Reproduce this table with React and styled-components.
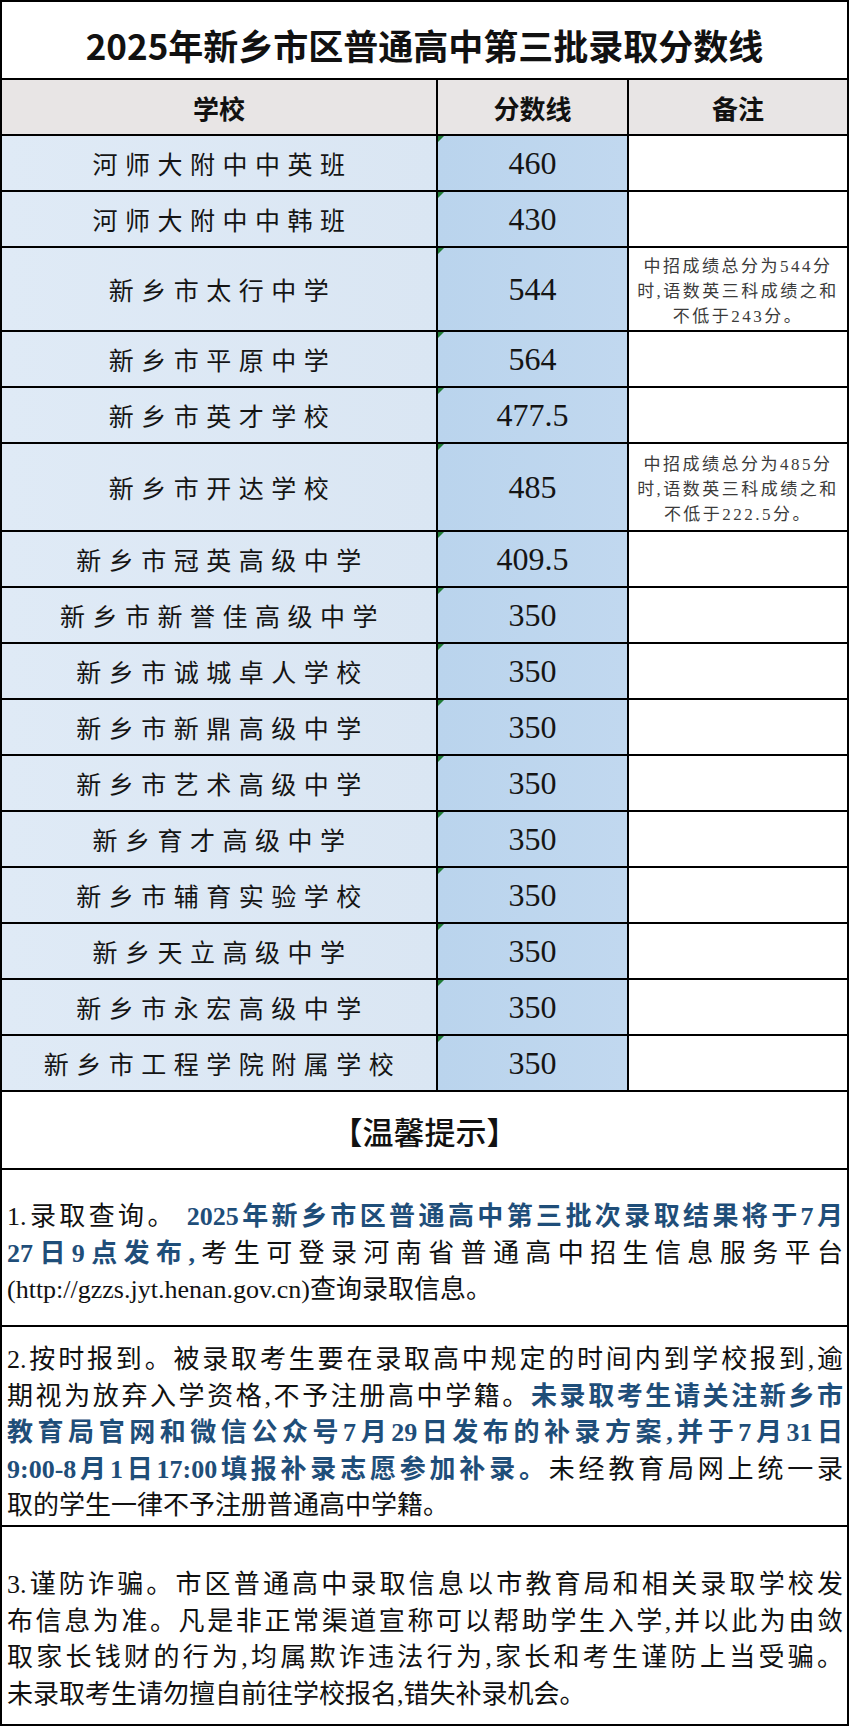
import React from "react";
import styled, { createGlobalStyle } from "styled-components";

const GlobalStyle = createGlobalStyle`
  html, body {
    margin: 0;
    padding: 0;
    background: #fff;
  }
  body {
    font-family: "Liberation Serif", "Noto Sans CJK SC", serif;
    color: #111;
  }
`;

const SANS = `"Noto Sans CJK SC", "Liberation Sans", sans-serif`;
const SERIF = `"Liberation Serif", "Noto Sans CJK SC", serif`;

const schools = [
  { name: "河师大附中中英班", score: "460" },
  { name: "河师大附中中韩班", score: "430" },
  {
    name: "新乡市太行中学",
    score: "544",
    h: 84,
    note: ["中招成绩总分为544分", "时,语数英三科成绩之和", "不低于243分。"],
  },
  { name: "新乡市平原中学", score: "564" },
  { name: "新乡市英才学校", score: "477.5" },
  {
    name: "新乡市开达学校",
    score: "485",
    h: 88,
    note: ["中招成绩总分为485分", "时,语数英三科成绩之和", "不低于222.5分。"],
  },
  { name: "新乡市冠英高级中学", score: "409.5" },
  { name: "新乡市新誉佳高级中学", score: "350" },
  { name: "新乡市诚城卓人学校", score: "350" },
  { name: "新乡市新鼎高级中学", score: "350" },
  { name: "新乡市艺术高级中学", score: "350" },
  { name: "新乡育才高级中学", score: "350" },
  { name: "新乡市辅育实验学校", score: "350" },
  { name: "新乡天立高级中学", score: "350" },
  { name: "新乡市永宏高级中学", score: "350" },
  { name: "新乡市工程学院附属学校", score: "350" },
];

const Sheet = styled.div`
  width: 849px;
  border: 2px solid #000;
  box-sizing: border-box;
  background: #fff;
`;

const TitleBar = styled.div`
  height: 78px;
  box-sizing: border-box;
  border-bottom: 2px solid #000;
  display: flex;
  align-items: center;
  justify-content: center;
  padding-top: 8px;
  font-family: ${SANS};
  font-weight: 700;
  font-size: 35px;
  color: #111;
`;

const Row = styled.div`
  display: grid;
  grid-template-columns: 436px 191px 1fr;
  grid-template-rows: 100%;
  height: ${(p) => p.h || 56}px;
  box-sizing: border-box;
  border-bottom: 2px solid #000;
  background: ${(p) => (p.head ? "#e8e5e5" : "transparent")};
`;

const Cell = styled.div`
  display: flex;
  align-items: center;
  justify-content: center;
  min-height: 0;
  overflow: hidden;
  box-sizing: border-box;
  border-right: ${(p) => (p.last ? "none" : "2px solid #000")};
`;

const HeadCell = styled(Cell)`
  font-family: ${SANS};
  font-weight: 700;
  font-size: 26px;
  color: #111;
`;

const NameCell = styled(Cell)`
  background: linear-gradient(to right, #dfeaf6, #dae6f3);
  font-family: ${SANS};
  font-size: 25px;
  letter-spacing: 7.5px;
  padding-left: 7px;
  color: #151515;
`;

const ScoreCell = styled(Cell)`
  position: relative;
  background: linear-gradient(to right, #bad4ed, #c1d8ef);
  font-family: ${SERIF};
  font-size: 32px;
  color: #151515;
  &::before {
    content: "";
    position: absolute;
    top: 0;
    left: 0;
    border-top: 6px solid #1f7a35;
    border-right: 6px solid transparent;
  }
`;

const NoteCell = styled(Cell)`
  flex-direction: column;
  font-family: ${SERIF};
  font-size: 17px;
  line-height: 25px;
  letter-spacing: 2.5px;
  color: #3b3b3b;
  padding-top: 4px;
`;

const Notice = styled.div`
  height: 78px;
  box-sizing: border-box;
  border-bottom: 2px solid #000;
  display: flex;
  align-items: center;
  justify-content: center;
  font-family: ${SANS};
  font-size: 31px;
  font-weight: 500;
  color: #111;
`;

const Para = styled.div`
  height: ${(p) => p.h}px;
  box-sizing: border-box;
  border-bottom: ${(p) => (p.end ? "none" : "2px solid #000")};
  padding: ${(p) => p.pt}px 4px 0 5px;
  font-family: ${SERIF};
  font-size: 26px;
  line-height: 36.5px;
  color: #111;
`;

const Line = styled.div`
  white-space: nowrap;
  text-align: ${(p) => (p.tail ? "left" : "justify")};
  text-align-last: ${(p) => (p.tail ? "left" : "justify")};
`;

const Blue = styled.span`
  color: #1f4e79;
  font-weight: 700;
`;

const App = () => (
  <>
    <GlobalStyle />
    <Sheet>
      <TitleBar>2025年新乡市区普通高中第三批录取分数线</TitleBar>

      <Row head>
        <HeadCell>学校</HeadCell>
        <HeadCell>分数线</HeadCell>
        <HeadCell last>备注</HeadCell>
      </Row>

      {schools.map((s) => (
        <Row key={s.name} h={s.h}>
          <NameCell>{s.name}</NameCell>
          <ScoreCell>{s.score}</ScoreCell>
          <NoteCell last>
            {s.note && s.note.map((l) => <div key={l}>{l}</div>)}
          </NoteCell>
        </Row>
      ))}

      <Notice>【温馨提示】</Notice>

      <Para h={157} pt={29}>
        <Line>
          1.录取查询。 <Blue>2025年新乡市区普通高中第三批次录取结果将于7月</Blue>
        </Line>
        <Line>
          <Blue>27日9点发布,</Blue>考生可登录河南省普通高中招生信息服务平台
        </Line>
        <Line tail>(http://gzzs.jyt.henan.gov.cn)查询录取信息。</Line>
      </Para>

      <Para h={200} pt={15}>
        <Line>2.按时报到。被录取考生要在录取高中规定的时间内到学校报到,逾</Line>
        <Line>
          期视为放弃入学资格,不予注册高中学籍。<Blue>未录取考生请关注新乡市</Blue>
        </Line>
        <Line>
          <Blue>教育局官网和微信公众号7月29日发布的补录方案,并于7月31日</Blue>
        </Line>
        <Line>
          <Blue>9:00-8月1日17:00填报补录志愿参加补录。</Blue>未经教育局网上统一录
        </Line>
        <Line tail>取的学生一律不予注册普通高中学籍。</Line>
      </Para>

      <Para h={197} pt={40} end>
        <Line>3.谨防诈骗。市区普通高中录取信息以市教育局和相关录取学校发</Line>
        <Line>布信息为准。凡是非正常渠道宣称可以帮助学生入学,并以此为由敛</Line>
        <Line>取家长钱财的行为,均属欺诈违法行为,家长和考生谨防上当受骗。</Line>
        <Line tail>未录取考生请勿擅自前往学校报名,错失补录机会。</Line>
      </Para>
    </Sheet>
  </>
);

export default App;
